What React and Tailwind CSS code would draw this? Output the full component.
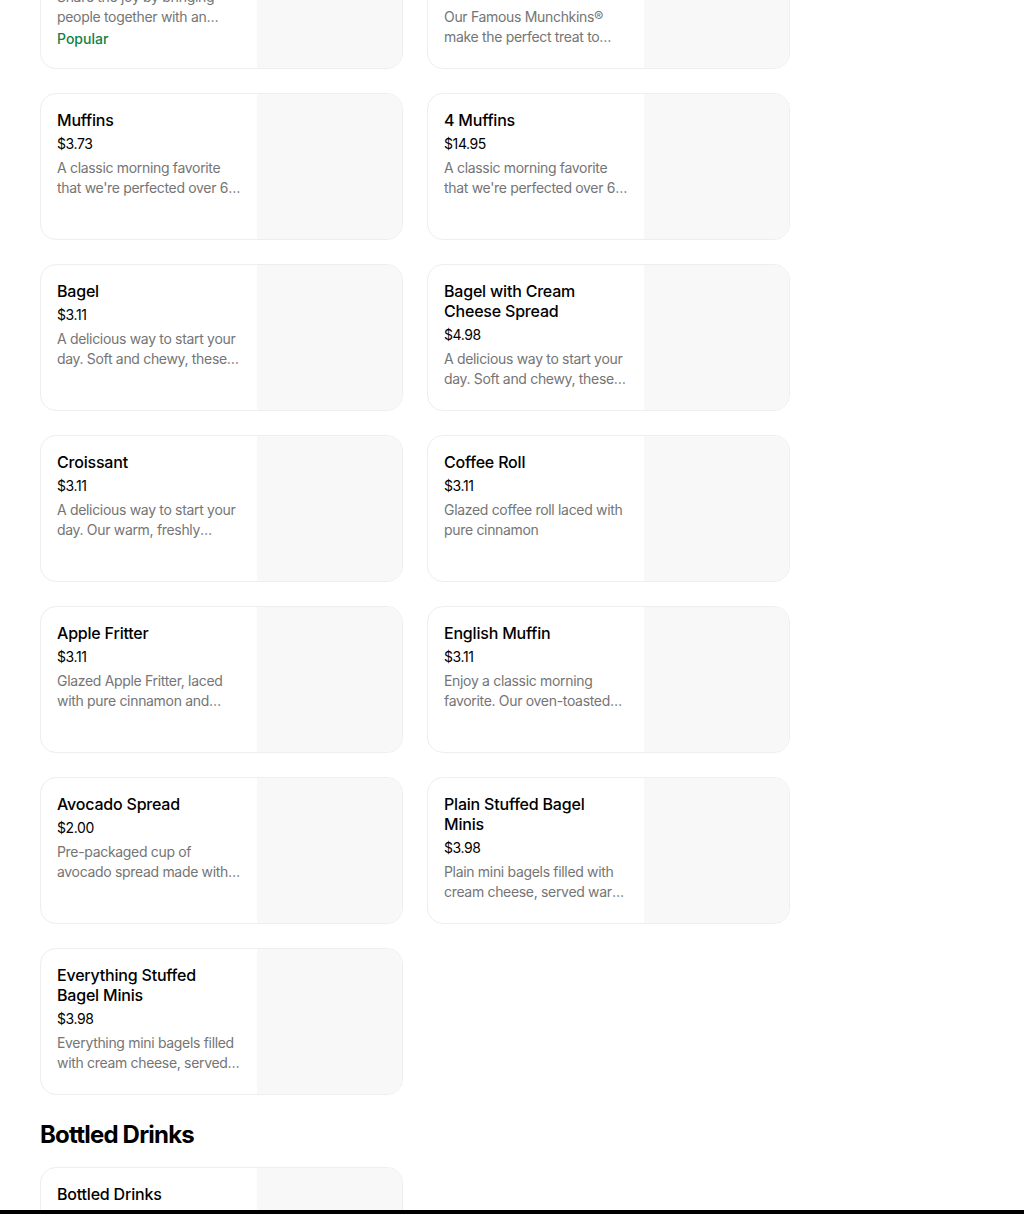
import React from "react";

const sections = [
  {
    heading: null,
    items: [
      {
        title: "Box O' Joe®",
        price: "$19.99",
        desc: "Share the joy by bringing people together with an assortment of coffee for everyone.",
        popular: true,
      },
      {
        title: "25 Munchkins® Donut Hole Treats",
        price: "$7.49",
        desc: "Our Famous Munchkins® make the perfect treat to share with friends and family.",
      },
      {
        title: "Muffins",
        price: "$3.73",
        desc: "A classic morning favorite that we're perfected over 60 years of baking with love.",
      },
      {
        title: "4 Muffins",
        price: "$14.95",
        desc: "A classic morning favorite that we're perfected over 60 years of baking with love.",
      },
      {
        title: "Bagel",
        price: "$3.11",
        desc: "A delicious way to start your day. Soft and chewy, these bagels are baked fresh.",
      },
      {
        title: "Bagel with Cream Cheese Spread",
        price: "$4.98",
        desc: "A delicious way to start your day. Soft and chewy, these bagels are baked fresh.",
      },
      {
        title: "Croissant",
        price: "$3.11",
        desc: "A delicious way to start your day. Our warm, freshly baked croissant is flaky.",
      },
      {
        title: "Coffee Roll",
        price: "$3.11",
        desc: "Glazed coffee roll laced with pure cinnamon",
      },
      {
        title: "Apple Fritter",
        price: "$3.11",
        desc: "Glazed Apple Fritter, laced with pure cinnamon and chunks of real apple.",
      },
      {
        title: "English Muffin",
        price: "$3.11",
        desc: "Enjoy a classic morning favorite. Our oven-toasted English muffin is delicious.",
      },
      {
        title: "Avocado Spread",
        price: "$2.00",
        desc: "Pre-packaged cup of avocado spread made with Hass avocados and sea salt.",
      },
      {
        title: "Plain Stuffed Bagel Minis",
        price: "$3.98",
        desc: "Plain mini bagels filled with cream cheese, served warm and toasty.",
      },
      {
        title: "Everything Stuffed Bagel Minis",
        price: "$3.98",
        desc: "Everything mini bagels filled with cream cheese, served warm and toasty.",
      },
    ],
  },
  {
    heading: "Bottled Drinks",
    items: [
      {
        title: "Bottled Drinks",
        price: "$2.49",
        desc: "A selection of cold bottled beverages to go with your order.",
      },
    ],
  },
];

function Card({ item }) {
  return (
    <div className="flex h-[147px] overflow-hidden rounded-2xl border border-[#eeeeee] bg-white">
      <div className="flex w-[216px] shrink-0 flex-col p-4">
        <div className="text-[16px] font-medium leading-5 tracking-[-0.2px] text-black">{item.title}</div>
        <div className="mt-1 text-[14px] leading-5 tracking-[-0.4px] text-black">{item.price}</div>
        <div className="mt-1 line-clamp-2 text-[14px] leading-5 tracking-[-0.32px] text-[#757575]">
          {item.desc}
        </div>
        {item.popular && (
          <div className="mt-1 text-[14px] font-medium leading-4 text-[#0e8345]">Popular</div>
        )}
      </div>
      <div className="flex-1 bg-[#f8f8f8]" />
    </div>
  );
}

export default function App() {
  return (
    <div
      className="flex h-[1214px] flex-col overflow-hidden bg-white"
      style={{ fontFamily: "Inter, Roboto, 'Liberation Sans', sans-serif" }}
    >
      <div className="min-h-0 flex-1 overflow-hidden">
        <div className="-mt-[78px] w-[830px] px-10">
          {sections.map((s, i) => (
            <div key={i}>
              {s.heading && (
                <h2 className="mb-4 mt-6 text-[24px] font-bold leading-8 tracking-[-0.8px] text-black">
                  {s.heading}
                </h2>
              )}
              <div className="grid grid-cols-2 gap-6">
                {s.items.map((it, j) => (
                  <Card key={j} item={it} />
                ))}
              </div>
            </div>
          ))}
        </div>
      </div>
      <div className="h-1 shrink-0 bg-black" />
    </div>
  );
}
